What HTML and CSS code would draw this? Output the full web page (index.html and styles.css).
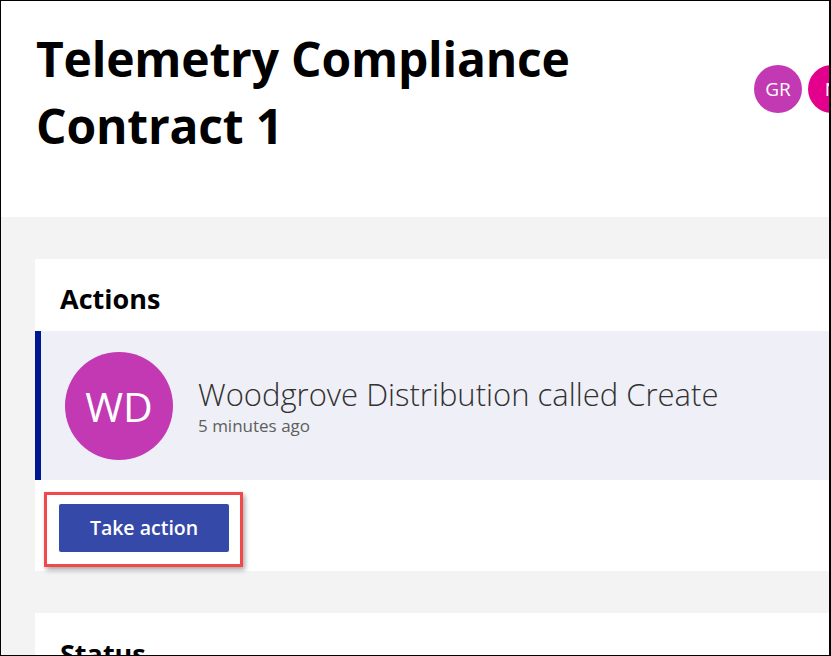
FILE: index.html
```html
<!DOCTYPE html>
<html lang="en">
<head>
<meta charset="utf-8">
<title>Telemetry Compliance Contract 1</title>
<link rel="stylesheet" href="styles.css">
</head>
<body>
<div class="frame">
  <header class="page-header">
    <h1 class="title">Telemetry Compliance<br>Contract 1</h1>
    <div class="people">
      <span class="persona persona-gr">GR</span>
      <span class="persona persona-n">N</span>
    </div>
  </header>
  <main class="content">
    <section class="card">
      <h2 class="card-title">Actions</h2>
      <div class="action-row">
        <span class="avatar">WD</span>
        <div class="action-text">
          <div class="action-name">Woodgrove Distribution called Create</div>
          <div class="action-time">5 minutes ago</div>
        </div>
      </div>
      <div class="highlight">
        <button class="primary-btn" type="button">Take action</button>
      </div>
    </section>
    <section class="card card-status">
      <h2 class="card-title">Status</h2>
    </section>
  </main>
</div>
</body>
</html>
```

FILE: styles.css
```css
* { box-sizing: border-box; }
html, body { margin: 0; padding: 0; }
body {
  width: 831px;
  height: 656px;
  overflow: hidden;
  font-family: "Open Sans", "Noto Sans", "DejaVu Sans", sans-serif;
  background: #fff;
}
.frame {
  width: 831px;
  height: 656px;
  border: 1px solid #000;
  border-right-width: 2px;
  overflow: hidden;
  display: flex;
  flex-direction: column;
  background: #f3f3f3;
}
.page-header {
  background: #fff;
  height: 216px;
  flex: none;
  display: flex;
  align-items: flex-start;
  padding-left: 35px;
}
.title {
  margin: 0;
  padding-top: 24px;
  font-size: 48px;
  line-height: 67px;
  font-weight: 700;
  color: #000;
  letter-spacing: -0.2px;
}
.people {
  margin-left: auto;
  margin-top: 64px;
  display: flex;
  gap: 6px;
  margin-right: -27px;
}
.persona {
  width: 48px;
  height: 48px;
  border-radius: 50%;
  display: flex;
  align-items: center;
  justify-content: center;
  color: #fff;
  font-size: 19px;
}
.persona-gr { background: #c239b3; }
.persona-n { background: #e3008c; }
.content {
  flex: 1;
  padding: 42px 0 0 34px;
  display: flex;
  flex-direction: column;
  gap: 42px;
}
.card {
  background: #fff;
  padding-bottom: 4px;
  display: flex;
  flex-direction: column;
}
.card-title {
  margin: 0;
  padding: 20px 0 0 25px;
  height: 72px;
  font-size: 27px;
  line-height: 40px;
  font-weight: 700;
  color: #000;
}
.action-row {
  background: #eeeff7;
  border-left: 6px solid #00188f;
  height: 149px;
  padding: 21px 0 20px 24px;
  display: flex;
  align-items: flex-start;
}
.avatar {
  width: 108px;
  height: 108px;
  border-radius: 50%;
  background: #c239b3;
  color: #fff;
  font-size: 41px;
  display: flex;
  align-items: center;
  justify-content: center;
  flex: none;
}
.action-text {
  margin: 24px 0 0 25px;
}
.action-name {
  font-size: 31px;
  font-weight: 300;
  color: #323130;
  line-height: 36px;
}
.action-time {
  margin-top: 2px;
  font-size: 17px;
  color: #605e5c;
  line-height: 24px;
}
.highlight {
  align-self: flex-start;
  margin: 12px 0 0 9px;
  padding: 9px 11px 12px 12px;
  border: 3px solid #f2474b;
  box-shadow: 2px 3px 5px rgba(0, 0, 0, 0.35);
}
.primary-btn {
  display: block;
  width: 170px;
  height: 48px;
  border: none;
  border-radius: 2px;
  background: #3549a8;
  color: #fff;
  font-family: inherit;
  font-size: 19.5px;
  font-weight: 600;
  padding: 0 0 2px;
}
.card-status {
  flex: 1;
}
.card-status .card-title {
  padding-top: 21px;
}
```
